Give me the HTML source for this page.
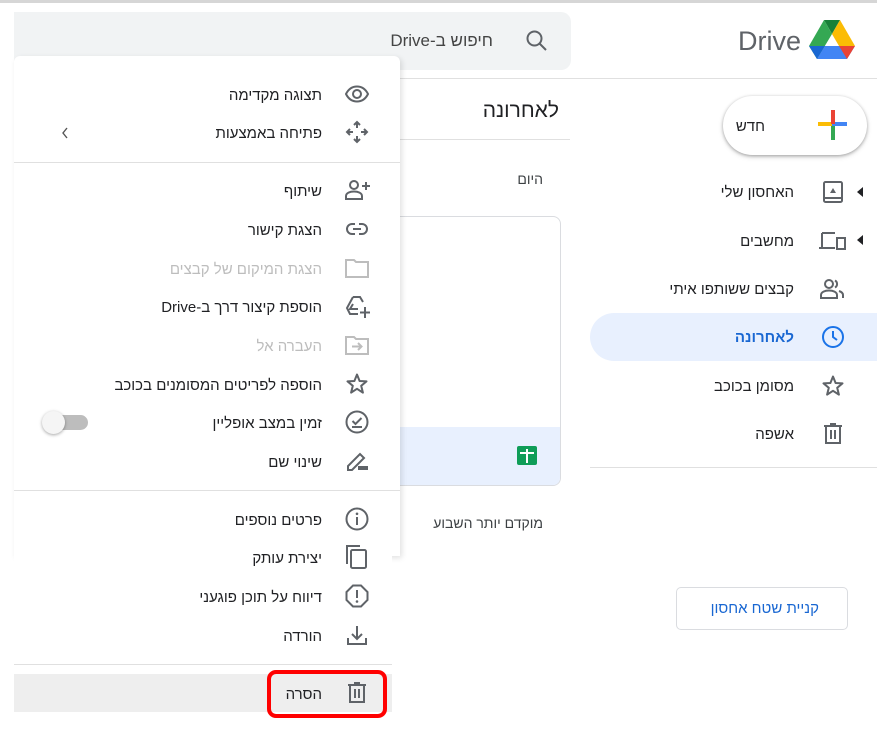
<!DOCTYPE html>
<html><head><meta charset="utf-8">
<style>
*{margin:0;padding:0;box-sizing:border-box}
body{width:877px;height:730px;position:relative;background:#fff;overflow:hidden;font-family:"Liberation Sans","Noto Sans CJK SC",sans-serif;color:#202124}
.a{position:absolute}
.t{position:absolute;font-size:15px;white-space:nowrap;direction:rtl;text-align:right}
svg{position:absolute}
.ic{stroke:#5f6368;fill:none;stroke-width:2}
</style></head><body>
<div class="a" style="left:0;top:0;width:877px;height:3px;background:#d6d6d6"></div>
<!-- search -->
<div class="a" style="left:14px;top:12px;width:557px;height:58px;background:#f1f3f4;border-radius:0 10px 10px 0"></div>
<div class="t" style="right:384px;top:31px;font-size:17px;color:#444">חיפוש ב-Drive</div>
<svg style="left:524px;top:28px" width="26" height="26" viewBox="0 0 26 26"><circle cx="10.5" cy="10.5" r="7" class="ic" stroke-width="2.4"/><path d="M15.5 15.5 L22 22" class="ic" stroke-width="2.6"/></svg>
<!-- header right -->
<div class="a" style="left:400px;top:78px;width:477px;height:1px;background:#e0e0e0"></div>
<div class="t" style="left:738px;top:26px;font-size:27px;color:#5f6368;direction:ltr">Drive</div>
<svg style="left:809px;top:20px" width="46" height="41" viewBox="0 0 46 41"><path d="M15 0 H31 L23 14 Z" fill="#188038"/><path d="M15 0 L0 26 L8 39 L23 14 Z" fill="#34a853"/><path d="M31 0 L46 26 H30 L23 14 Z" fill="#fbbc04"/><path d="M8 39 L16 26 H46 L38 39 Z" fill="#4285f4"/><path d="M0 26 H16 L8 39 Z" fill="#1967d2"/><path d="M30 26 H46 L38 39 Z" fill="#ea4335"/></svg>
<!-- new button -->
<div class="a" style="left:723px;top:96px;width:144px;height:59px;border-radius:30px;background:#fff;box-shadow:0 1px 3px rgba(0,0,0,.3),0 2px 6px rgba(0,0,0,.12)"></div>
<div class="t" style="right:112px;top:118px;font-size:15px">חדש</div>
<svg style="left:818px;top:110px" width="30" height="30" viewBox="0 0 30 30"><rect x="0" y="12" width="14" height="4" fill="#fbbc04"/><rect x="14" y="12" width="15" height="4" fill="#4285f4"/><rect x="13" y="0" width="4" height="14" fill="#ea4335"/><rect x="13" y="16" width="4" height="14" fill="#34a853"/></svg>
<!-- nav -->
<div class="a" style="left:590px;top:313px;width:300px;height:48px;background:#e8f0fe;border-radius:24px 0 0 24px"></div>
<div class="t" style="right:83px;top:184px">האחסון שלי</div>
<div class="t" style="right:83px;top:233px">מחשבים</div>
<div class="t" style="right:83px;top:281px">קבצים ששותפו איתי</div>
<div class="t" style="right:83px;top:329px;color:#1967d2;font-weight:bold">לאחרונה</div>
<div class="t" style="right:83px;top:378px">מסומן בכוכב</div>
<div class="t" style="right:83px;top:426px">אשפה</div>
<svg style="left:821px;top:180px" width="24" height="24" viewBox="0 0 24 24"><rect x="3" y="2" width="18" height="20" rx="1.5" class="ic"/><path d="M3 18 H21" class="ic"/><path d="M9 13 L12 8 L15 13 Z" fill="#5f6368"/></svg>
<svg style="left:855px;top:186px" width="10" height="12"><path d="M8 1 L2 6 L8 11Z" fill="#202124"/></svg>
<svg style="left:818px;top:229px" width="30" height="24" viewBox="0 0 30 24"><path d="M4 4 H17 M4 4 V18 M1 19 H17" class="ic"/><rect x="19" y="9" width="8" height="11" class="ic"/></svg>
<svg style="left:855px;top:234px" width="10" height="12"><path d="M8 1 L2 6 L8 11Z" fill="#202124"/></svg>
<svg style="left:819px;top:277px" width="28" height="24" viewBox="0 0 28 24"><circle cx="10" cy="7" r="4" class="ic"/><path d="M2 21 V18 C2 15 6 13.5 10 13.5 S18 15 18 18 V21 Z" class="ic"/><path d="M16 3.5 A4 4 0 0 1 16 10.5 M20 14 C23 15 24 16.5 24 18 V21" class="ic"/></svg>
<svg style="left:821px;top:325px" width="24" height="24" viewBox="0 0 24 24"><circle cx="12" cy="12" r="10" stroke="#1a73e8" stroke-width="2" fill="none"/><path d="M12 6 V12 L16 15" stroke="#1a73e8" stroke-width="2" fill="none"/></svg>
<svg style="left:821px;top:374px" width="24" height="24" viewBox="0 0 24 24"><path d="M12 2.5 L14.6 9 L21.5 9.4 L16.2 13.8 L17.9 20.6 L12 16.8 L6.1 20.6 L7.8 13.8 L2.5 9.4 L9.4 9 Z" class="ic" stroke-linejoin="round"/></svg>
<svg style="left:821px;top:422px" width="24" height="24" viewBox="0 0 24 24"><path d="M3 4 H21 M9 2 H15 M5 4 V21 H19 V4 M10 8 V17 M14 8 V17" class="ic"/></svg>
<div class="a" style="left:590px;top:467px;width:287px;height:1px;background:#e0e0e0"></div>
<div class="a" style="left:676px;top:587px;width:172px;height:43px;border:1px solid #dadce0;border-radius:5px"></div>
<div class="t" style="right:58px;top:600px;color:#1967d2">קניית שטח אחסון</div>
<!-- middle -->
<div class="t" style="right:318px;top:99px;font-size:21px">לאחרונה</div>
<div class="a" style="left:400px;top:139px;width:170px;height:1px;background:#e0e0e0"></div>
<div class="t" style="right:334px;top:171px;font-size:14px;color:#3c4043">היום</div>
<div class="a" style="left:380px;top:216px;width:181px;height:270px;border:1px solid #dadce0;border-radius:8px;background:#fff;overflow:hidden"><div class="a" style="left:0;top:210px;width:181px;height:60px;background:#e8f0fe"></div></div>
<div class="a" style="left:517px;top:446px;width:20px;height:19px;background:#0f9d58;border-radius:2px"></div>
<div class="a" style="left:526px;top:449px;width:2px;height:14px;background:#fff"></div>
<div class="a" style="left:520px;top:452px;width:14px;height:2px;background:#fff"></div>
<div class="t" style="right:334px;top:515px;font-size:14px;color:#3c4043">מוקדם יותר השבוע</div>
<!-- menu -->
<div class="a" style="left:14px;top:56px;width:386px;height:500px;background:#fff;border-radius:6px 6px 0 0;box-shadow:2px 2px 6px rgba(0,0,0,.12)"></div>
<div class="a" style="left:14px;top:550px;width:378px;height:180px;background:#fff"></div>
<div class="a" style="left:14px;top:162px;width:386px;height:1px;background:#e0e0e0"></div>
<div class="a" style="left:14px;top:490px;width:386px;height:1px;background:#e0e0e0"></div>
<div class="a" style="left:14px;top:664px;width:378px;height:1px;background:#e0e0e0"></div>
<div class="a" style="left:14px;top:674px;width:378px;height:38px;background:#eeeeee"></div>

<div class="t" style="right:555px;top:87px">תצוגה מקדימה</div>
<div class="t" style="right:555px;top:125px">פתיחה באמצעות</div>
<svg style="left:60px;top:126px" width="10" height="14"><path d="M7 2 L3 7 L7 12" stroke="#555" stroke-width="1.4" fill="none"/></svg>
<div class="t" style="right:555px;top:183px">שיתוף</div>
<div class="t" style="right:555px;top:222px">הצגת קישור</div>
<div class="t" style="right:555px;top:261px;color:#bdbdbd">הצגת המיקום של קבצים</div>
<div class="t" style="right:555px;top:299px">הוספת קיצור דרך ב-Drive</div>
<div class="t" style="right:555px;top:338px;color:#bdbdbd">העברה אל</div>
<div class="t" style="right:555px;top:377px">הוספה לפריטים המסומנים בכוכב</div>
<div class="t" style="right:555px;top:415px">זמין במצב אופליין</div>
<div class="t" style="right:555px;top:454px">שינוי שם</div>
<div class="t" style="right:555px;top:512px">פרטים נוספים</div>
<div class="t" style="right:555px;top:550px">יצירת עותק</div>
<div class="t" style="right:555px;top:589px">דיווח על תוכן פוגעני</div>
<div class="t" style="right:555px;top:628px">הורדה</div>
<div class="t" style="right:555px;top:686px">הסרה</div>
<!-- toggle -->
<div class="a" style="left:46px;top:415px;width:42px;height:15px;border-radius:8px;background:#bdbdbd"></div>
<div class="a" style="left:42px;top:411px;width:23px;height:23px;border-radius:50%;background:#f5f5f5;box-shadow:0 1px 3px rgba(0,0,0,.35)"></div>
<!-- menu icons -->
<svg style="left:345px;top:82px" width="24" height="24" viewBox="0 0 24 24"><path d="M1 12 C4 6 8 4.5 12 4.5 S20 6 23 12 C20 18 16 19.5 12 19.5 S4 18 1 12Z" class="ic"/><circle cx="12" cy="12" r="4" class="ic"/></svg>
<svg style="left:345px;top:120px" width="24" height="24" viewBox="0 0 24 24"><path d="M12 2 V8 M12 16 V22 M2 12 H8 M16 12 H22" class="ic"/><path d="M9 5 L12 2 L15 5 M9 19 L12 22 L15 19 M5 9 L2 12 L5 15 M19 9 L22 12 L19 15" class="ic"/></svg>
<svg style="left:345px;top:178px" width="26" height="24" viewBox="0 0 26 24"><circle cx="9" cy="7" r="4" class="ic"/><path d="M1 21 V18 C1 15 5 13.5 9 13.5 S17 15 17 18 V21 Z" class="ic"/><path d="M21 4 V12 M17 8 H25" class="ic"/></svg>
<svg style="left:345px;top:217px" width="24" height="24" viewBox="0 0 24 24"><path d="M10 7 H7 A5 5 0 0 0 7 17 H10 M14 7 H17 A5 5 0 0 1 17 17 H14 M8 12 H16" class="ic"/></svg>
<svg style="left:345px;top:256px" width="24" height="24" viewBox="0 0 24 24"><path d="M1 4 H9 L11 6 H23 V21 H1 Z" stroke="#bdbdbd" stroke-width="2" fill="none"/></svg>
<svg style="left:345px;top:294px" width="26" height="26" viewBox="0 0 26 26"><path d="M8 3 H15 L18 8 M8 3 L2 14 L5 20 H13 M8 10 L5 15 H13" class="ic"/><path d="M20 13 V24 M15 18.5 H25" class="ic"/></svg>
<svg style="left:345px;top:333px" width="24" height="24" viewBox="0 0 24 24"><path d="M1 4 H9 L11 6 H23 V21 H1 Z" stroke="#bdbdbd" stroke-width="2" fill="none"/><path d="M7 13.5 H16 M13 10 L16.5 13.5 L13 17" stroke="#bdbdbd" stroke-width="2" fill="none"/></svg>
<svg style="left:345px;top:372px" width="24" height="24" viewBox="0 0 24 24"><path d="M12 2.5 L14.6 9 L21.5 9.4 L16.2 13.8 L17.9 20.6 L12 16.8 L6.1 20.6 L7.8 13.8 L2.5 9.4 L9.4 9 Z" class="ic" stroke-linejoin="round"/></svg>
<svg style="left:345px;top:410px" width="24" height="24" viewBox="0 0 24 24"><circle cx="12" cy="12" r="10.5" class="ic"/><path d="M7.5 11 L10.5 14 L16.5 8 M7 17 H17" class="ic"/></svg>
<svg style="left:345px;top:449px" width="24" height="24" viewBox="0 0 24 24"><path d="M3 21 V17 L15 5 L19 9 L7 21 Z" class="ic"/><rect x="13" y="17" width="10" height="4" fill="#5f6368"/></svg>
<svg style="left:345px;top:507px" width="24" height="24" viewBox="0 0 24 24"><circle cx="12" cy="12" r="10.5" class="ic"/><path d="M12 10 V18" class="ic"/><circle cx="12" cy="6.8" r="1.3" fill="#5f6368"/></svg>
<svg style="left:345px;top:544px" width="24" height="26" viewBox="0 0 24 26"><path d="M2 20 V2 H15" class="ic"/><rect x="6" y="6" width="15" height="18" rx="1.5" class="ic"/></svg>
<svg style="left:345px;top:584px" width="24" height="24" viewBox="0 0 24 24"><path d="M8 1.5 H16 L22.5 8 V16 L16 22.5 H8 L1.5 16 V8 Z" class="ic"/><path d="M12 6 V14" class="ic"/><circle cx="12" cy="17.5" r="1.3" fill="#5f6368"/></svg>
<svg style="left:345px;top:623px" width="24" height="24" viewBox="0 0 24 24"><path d="M12 3 V16 M7 11 L12 16 L17 11 M3 15 V21 H21 V15" class="ic"/></svg>
<svg style="left:345px;top:681px" width="24" height="24" viewBox="0 0 24 24"><path d="M3 4 H21 M9 2 H15 M5 4 V21 H19 V4 M10 8 V17 M14 8 V17" class="ic"/></svg>
<!-- red highlight -->
<div class="a" style="left:267px;top:670px;width:120px;height:48px;border:4px solid #f00;border-radius:9px"></div>
</body></html>
